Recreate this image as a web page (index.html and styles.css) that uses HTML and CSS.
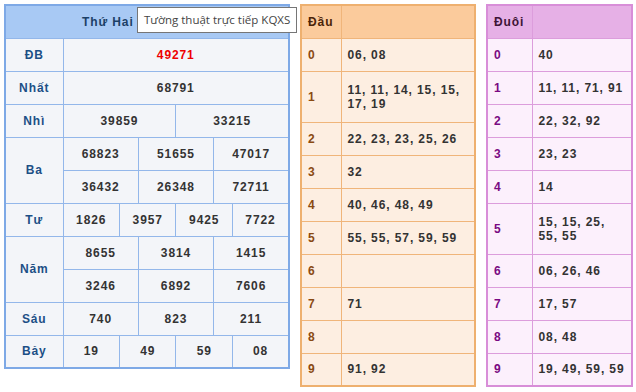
FILE: index.html
```html
<!DOCTYPE html>
<html lang="vi">
<head>
<meta charset="utf-8">
<title>KQXS</title>
<link rel="stylesheet" href="styles.css">
</head>
<body>
<div class="page">
  <table class="kq">
    <colgroup>
      <col class="c-label">
      <col span="12">
    </colgroup>
    <thead>
      <tr><th colspan="13" class="day">Thứ Hai</th></tr>
    </thead>
    <tbody>
      <tr><th>ĐB</th><td colspan="12" class="db">49271</td></tr>
      <tr><th>Nhất</th><td colspan="12">68791</td></tr>
      <tr><th>Nhì</th><td colspan="6">39859</td><td colspan="6">33215</td></tr>
      <tr><th rowspan="2">Ba</th><td colspan="4">68823</td><td colspan="4">51655</td><td colspan="4">47017</td></tr>
      <tr><td colspan="4">36432</td><td colspan="4">26348</td><td colspan="4">72711</td></tr>
      <tr><th>Tư</th><td colspan="3">1826</td><td colspan="3">3957</td><td colspan="3">9425</td><td colspan="3">7722</td></tr>
      <tr><th rowspan="2">Năm</th><td colspan="4">8655</td><td colspan="4">3814</td><td colspan="4">1415</td></tr>
      <tr><td colspan="4">3246</td><td colspan="4">6892</td><td colspan="4">7606</td></tr>
      <tr><th>Sáu</th><td colspan="4">740</td><td colspan="4">823</td><td colspan="4">211</td></tr>
      <tr><th>Bảy</th><td colspan="3">19</td><td colspan="3">49</td><td colspan="3">59</td><td colspan="3">08</td></tr>
    </tbody>
  </table>

  <table class="lt dau">
    <thead><tr><th>Đầu</th><th></th></tr></thead>
    <tbody>
      <tr><th>0</th><td>06, 08</td></tr>
      <tr class="tall"><th>1</th><td>11, 11, 14, 15, 15, 17, 19</td></tr>
      <tr><th>2</th><td>22, 23, 23, 25, 26</td></tr>
      <tr><th>3</th><td>32</td></tr>
      <tr><th>4</th><td>40, 46, 48, 49</td></tr>
      <tr><th>5</th><td>55, 55, 57, 59, 59</td></tr>
      <tr><th>6</th><td></td></tr>
      <tr><th>7</th><td>71</td></tr>
      <tr><th>8</th><td></td></tr>
      <tr><th>9</th><td>91, 92</td></tr>
    </tbody>
  </table>

  <table class="lt duoi">
    <thead><tr><th>Đuôi</th><th></th></tr></thead>
    <tbody>
      <tr><th>0</th><td>40</td></tr>
      <tr><th>1</th><td>11, 11, 71, 91</td></tr>
      <tr><th>2</th><td>22, 32, 92</td></tr>
      <tr><th>3</th><td>23, 23</td></tr>
      <tr><th>4</th><td>14</td></tr>
      <tr class="tall"><th>5</th><td>15, 15, 25, 55, 55</td></tr>
      <tr><th>6</th><td>06, 26, 46</td></tr>
      <tr><th>7</th><td>17, 57</td></tr>
      <tr><th>8</th><td>08, 48</td></tr>
      <tr><th>9</th><td>19, 49, 59, 59</td></tr>
    </tbody>
  </table>

  <div class="tooltip">Tường thuật trực tiếp KQXS</div>
</div>
</body>
</html>
```

FILE: styles.css
```css
html, body {
  margin: 0;
  padding: 0;
  background: #ffffff;
}

.page {
  position: relative;
  display: flex;
  align-items: flex-start;
  padding: 4px 0 0 4px;
  font-family: "Liberation Sans", Arial, sans-serif;
  font-size: 12px;
  font-weight: bold;
  letter-spacing: 0.9px;
  color: #333333;
}

table {
  border-collapse: collapse;
  table-layout: fixed;
}

th, td {
  height: 33px;
  padding: 0 6px;
  line-height: 14px;
  box-sizing: border-box;
}

/* ---------- main result table ---------- */
.kq {
  width: 286px;
  border: 2px solid #7ea9e6;
  background: #f3f5f9;
}

.kq .c-label {
  width: 58px;
}

.kq th, .kq td {
  border: 1px solid #93b7ea;
  text-align: center;
}

.kq tbody th {
  color: #1c4f86;
}

.kq .day {
  background: #a8c9f4;
  color: #1c3f66;
  text-align: left;
  padding-left: 76px;
}

.kq .db {
  color: #ee0000;
}

/* ---------- loto tables ---------- */
.lt th, .lt td {
  text-align: left;
  vertical-align: middle;
}

.lt tr.tall th, .lt tr.tall td {
  height: 51px;
}

.dau {
  width: 176px;
  margin-left: 10px;
  border: 2px solid #eeb06f;
  background: #fdeee1;
}

.dau th, .dau td {
  border: 1px solid #f0b57a;
}

.dau th:first-child {
  width: 40px;
}

.dau thead th {
  background: #fbcb9c;
  color: #4b2408;
}

.dau tbody th {
  color: #8a4a12;
}

.duoi {
  width: 147px;
  margin-left: 10px;
  border: 2px solid #d88ed8;
  background: #fcf0fc;
}

.duoi th, .duoi td {
  border: 1px solid #dc9ddc;
}

.duoi th:first-child {
  width: 45px;
}

.duoi thead th {
  background: #e6b0e6;
  color: #3d1436;
}

.duoi tbody th {
  color: #7a0a82;
}

/* ---------- tooltip ---------- */
.tooltip {
  position: absolute;
  left: 137px;
  top: 7px;
  padding: 5px 6px;
  background: #ffffff;
  border: 1px solid #767676;
  font-family: "Open Sans", "Noto Sans", sans-serif;
  font-size: 11.5px;
  font-weight: normal;
  letter-spacing: 0;
  line-height: 14px;
  color: #444444;
  white-space: nowrap;
}
```
